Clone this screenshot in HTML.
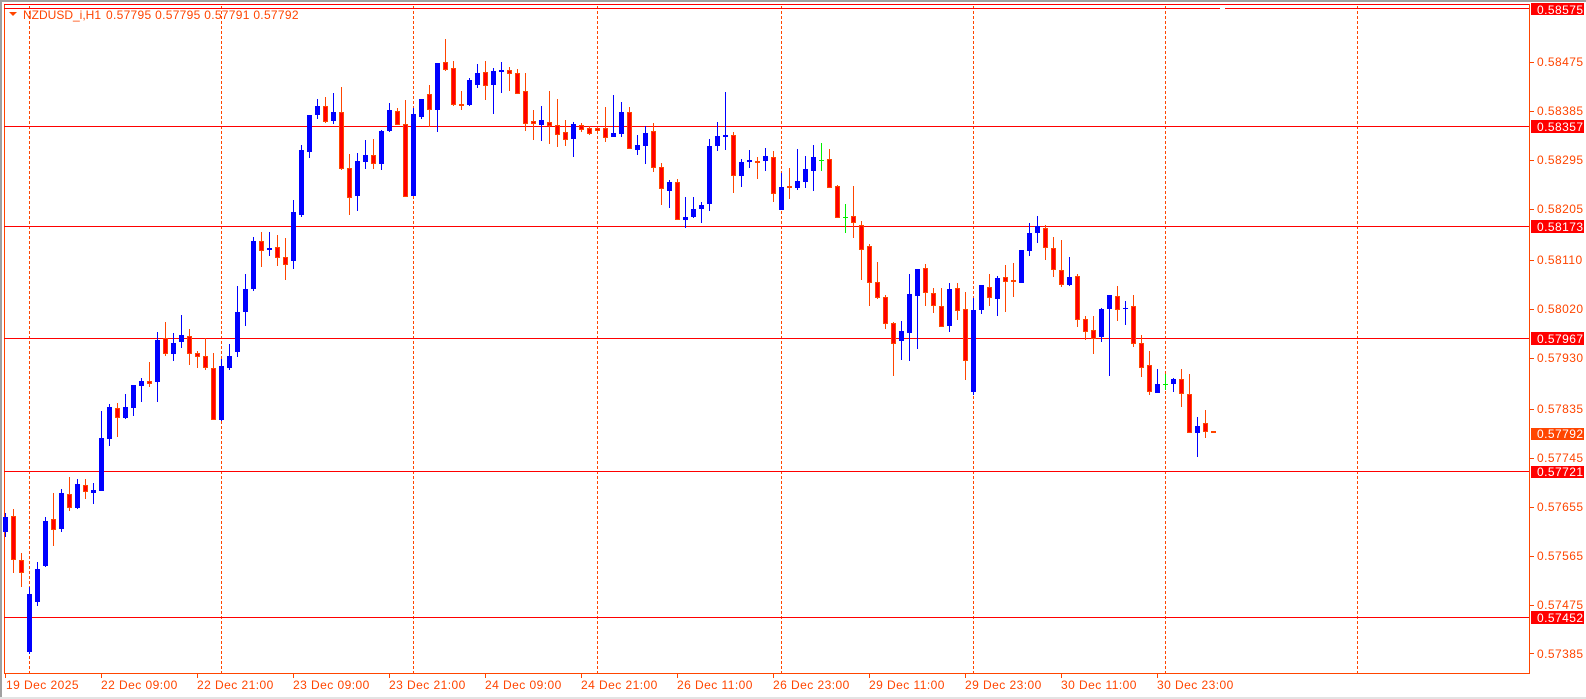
<!DOCTYPE html>
<html><head><meta charset="utf-8"><style>
html,body{margin:0;padding:0;background:#fff;width:1586px;height:699px;overflow:hidden}
svg{display:block}
text{font-family:"Liberation Sans",Arial,sans-serif;font-size:12px;letter-spacing:0.45px}
text.t{letter-spacing:0}
.b path{stroke:#0000ff;fill:none}.b rect{fill:#0000ff}
.r path{stroke:#ff4500;fill:none}.r rect{fill:#ff0000;stroke:#ff4500;stroke-width:1}
.g path{stroke:#00ee00;fill:none}.g rect{fill:#00ee00}
</style></head><body>
<svg width="1586" height="699" viewBox="0 0 1586 699" xmlns="http://www.w3.org/2000/svg">
<rect x="0" y="0" width="1586" height="699" fill="#fff"/>
<rect x="0" y="0" width="1586" height="2" fill="#a0a0a0"/>
<rect x="0" y="0" width="2" height="699" fill="#a0a0a0"/>
<rect x="0" y="697" width="1586" height="2" fill="#e3e3e3"/>
<path d="M4.5 4.5H1529.5V673.5H4.5Z" fill="none" stroke="#ff4500"/>
<g stroke="#ff4500" stroke-dasharray="3 2">
<path d="M29.5 6V673M221.5 6V673M413.5 6V673M597.5 6V673M781.5 6V673M973.5 6V673M1165.5 6V673M1357.5 6V673"/>
</g>
<g stroke="#ff0000">
<path d="M4 4.5H1529"/>
<path d="M4 8.5H1220M1225 8.5H1529"/>
<path d="M4 126.5H1529M4 226.5H1529M4 338.5H1529M4 471.5H1529M4 617.5H1529"/>
</g>
<g class="b" transform="translate(5)"><path d="M.5 513V537"/><rect x="-2" y="517" width="5" height="15"/></g>
<g class="r" transform="translate(13)"><path d="M.5 509V573"/><rect x="-1.5" y="516.5" width="4" height="43"/></g>
<g class="r" transform="translate(21)"><path d="M.5 553V587"/><rect x="-1.5" y="560.5" width="4" height="12"/></g>
<g class="b" transform="translate(29)"><path d="M.5 587V654"/><rect x="-2" y="594" width="5" height="58"/></g>
<g class="b" transform="translate(37)"><path d="M.5 562V606"/><rect x="-2" y="569" width="5" height="33"/></g>
<g class="b" transform="translate(45)"><path d="M.5 517V567"/><rect x="-2" y="521" width="5" height="45"/></g>
<g class="r" transform="translate(53)"><path d="M.5 493V546"/><rect x="-1.5" y="519.5" width="4" height="10"/></g>
<g class="b" transform="translate(61)"><path d="M.5 489V532"/><rect x="-2" y="493" width="5" height="36"/></g>
<g class="r" transform="translate(69)"><path d="M.5 477V511"/><rect x="-1.5" y="494.5" width="4" height="13"/></g>
<g class="b" transform="translate(77)"><path d="M.5 479V509"/><rect x="-2" y="484" width="5" height="24"/></g>
<g class="r" transform="translate(85)"><path d="M.5 479V499"/><rect x="-1.5" y="485.5" width="4" height="6"/></g>
<g class="b" transform="translate(93)"><path d="M.5 483V504"/><rect x="-2" y="490" width="5" height="3"/></g>
<g class="b" transform="translate(101)"><path d="M.5 411V491"/><rect x="-2" y="438" width="5" height="53"/></g>
<g class="b" transform="translate(109)"><path d="M.5 404V446"/><rect x="-2" y="407" width="5" height="32"/></g>
<g class="r" transform="translate(117)"><path d="M.5 403V437"/><rect x="-1.5" y="408.5" width="4" height="9"/></g>
<g class="b" transform="translate(125)"><path d="M.5 394V419"/><rect x="-2" y="407" width="5" height="11"/></g>
<g class="b" transform="translate(133)"><path d="M.5 385V416"/><rect x="-2" y="385" width="5" height="23"/></g>
<g class="b" transform="translate(141)"><path d="M.5 378V402"/><rect x="-2" y="381" width="5" height="5"/></g>
<g class="r" transform="translate(149)"><path d="M.5 362V387"/><rect x="-1.5" y="381.5" width="4" height="2"/></g>
<g class="b" transform="translate(157)"><path d="M.5 332V402"/><rect x="-2" y="340" width="5" height="42"/></g>
<g class="r" transform="translate(165)"><path d="M.5 322V356"/><rect x="-1.5" y="338.5" width="4" height="15"/></g>
<g class="b" transform="translate(173)"><path d="M.5 333V361"/><rect x="-2" y="343" width="5" height="11"/></g>
<g class="b" transform="translate(181)"><path d="M.5 315V348"/><rect x="-2" y="335" width="5" height="7"/></g>
<g class="r" transform="translate(189)"><path d="M.5 329V365"/><rect x="-1.5" y="336.5" width="4" height="17"/></g>
<g class="r" transform="translate(197)"><path d="M.5 351V368"/><rect x="-1.5" y="353.5" width="4" height="3"/></g>
<g class="r" transform="translate(205)"><path d="M.5 338V370"/><rect x="-1.5" y="356.5" width="4" height="11"/></g>
<g class="r" transform="translate(213)"><path d="M.5 353V419"/><rect x="-1.5" y="368.5" width="4" height="51"/></g>
<g class="b" transform="translate(221)"><path d="M.5 359V421"/><rect x="-2" y="366" width="5" height="54"/></g>
<g class="b" transform="translate(229)"><path d="M.5 344V370"/><rect x="-2" y="356" width="5" height="12"/></g>
<g class="b" transform="translate(237)"><path d="M.5 286V357"/><rect x="-2" y="312" width="5" height="40"/></g>
<g class="b" transform="translate(245)"><path d="M.5 274V326"/><rect x="-2" y="289" width="5" height="23"/></g>
<g class="b" transform="translate(253)"><path d="M.5 237V291"/><rect x="-2" y="241" width="5" height="48"/></g>
<g class="r" transform="translate(261)"><path d="M.5 232V267"/><rect x="-1.5" y="241.5" width="4" height="9"/></g>
<g class="b" transform="translate(269)"><path d="M.5 232V256"/><rect x="-2" y="248" width="5" height="2"/></g>
<g class="r" transform="translate(277)"><path d="M.5 235V266"/><rect x="-1.5" y="247.5" width="4" height="10"/></g>
<g class="r" transform="translate(285)"><path d="M.5 238V280"/><rect x="-1.5" y="257.5" width="4" height="7"/></g>
<g class="b" transform="translate(293)"><path d="M.5 200V269"/><rect x="-2" y="212" width="5" height="49"/></g>
<g class="b" transform="translate(301)"><path d="M.5 145V217"/><rect x="-2" y="150" width="5" height="65"/></g>
<g class="b" transform="translate(309)"><path d="M.5 115V158"/><rect x="-2" y="115" width="5" height="37"/></g>
<g class="b" transform="translate(317)"><path d="M.5 99V119"/><rect x="-2" y="106" width="5" height="9"/></g>
<g class="r" transform="translate(325)"><path d="M.5 97V123"/><rect x="-1.5" y="106.5" width="4" height="15"/></g>
<g class="b" transform="translate(333)"><path d="M.5 93V124"/><rect x="-2" y="112" width="5" height="9"/></g>
<g class="r" transform="translate(341)"><path d="M.5 87V170"/><rect x="-1.5" y="112.5" width="4" height="56"/></g>
<g class="r" transform="translate(349)"><path d="M.5 154V215"/><rect x="-1.5" y="168.5" width="4" height="29"/></g>
<g class="b" transform="translate(357)"><path d="M.5 153V211"/><rect x="-2" y="161" width="5" height="35"/></g>
<g class="b" transform="translate(365)"><path d="M.5 140V169"/><rect x="-2" y="155" width="5" height="7"/></g>
<g class="r" transform="translate(373)"><path d="M.5 139V169"/><rect x="-1.5" y="155.5" width="4" height="8"/></g>
<g class="b" transform="translate(381)"><path d="M.5 130V170"/><rect x="-2" y="131" width="5" height="33"/></g>
<g class="b" transform="translate(389)"><path d="M.5 103V132"/><rect x="-2" y="110" width="5" height="21"/></g>
<g class="r" transform="translate(397)"><path d="M.5 108V125"/><rect x="-1.5" y="111.5" width="4" height="13"/></g>
<g class="r" transform="translate(405)"><path d="M.5 100V196"/><rect x="-1.5" y="124.5" width="4" height="72"/></g>
<g class="b" transform="translate(413)"><path d="M.5 108V196"/><rect x="-2" y="114" width="5" height="82"/></g>
<g class="b" transform="translate(421)"><path d="M.5 99V119"/><rect x="-2" y="99" width="5" height="18"/></g>
<g class="r" transform="translate(429)"><path d="M.5 85V127"/><rect x="-1.5" y="94.5" width="4" height="15"/></g>
<g class="b" transform="translate(437)"><path d="M.5 63V132"/><rect x="-2" y="63" width="5" height="47"/></g>
<g class="r" transform="translate(445)"><path d="M.5 39V71"/><rect x="-1.5" y="62.5" width="4" height="7"/></g>
<g class="r" transform="translate(453)"><path d="M.5 61V106"/><rect x="-1.5" y="68.5" width="4" height="36"/></g>
<g class="r" transform="translate(461)"><path d="M.5 91V110"/><rect x="-1.5" y="104.5" width="4" height="1"/></g>
<g class="b" transform="translate(469)"><path d="M.5 78V106"/><rect x="-2" y="80" width="5" height="25"/></g>
<g class="b" transform="translate(477)"><path d="M.5 64V88"/><rect x="-2" y="73" width="5" height="12"/></g>
<g class="r" transform="translate(485)"><path d="M.5 61V100"/><rect x="-1.5" y="72.5" width="4" height="13"/></g>
<g class="b" transform="translate(493)"><path d="M.5 68V114"/><rect x="-2" y="71" width="5" height="14"/></g>
<g class="b" transform="translate(501)"><path d="M.5 62V93"/><rect x="-2" y="70" width="5" height="2"/></g>
<g class="r" transform="translate(509)"><path d="M.5 67V91"/><rect x="-1.5" y="70.5" width="4" height="3"/></g>
<g class="r" transform="translate(517)"><path d="M.5 69V93"/><rect x="-1.5" y="73.5" width="4" height="20"/></g>
<g class="r" transform="translate(525)"><path d="M.5 73V131"/><rect x="-1.5" y="91.5" width="4" height="32"/></g>
<g class="r" transform="translate(533)"><path d="M.5 110V140"/><rect x="-1.5" y="121.5" width="4" height="2"/></g>
<g class="b" transform="translate(541)"><path d="M.5 106V141"/><rect x="-2" y="120" width="5" height="5"/></g>
<g class="r" transform="translate(549)"><path d="M.5 91V144"/><rect x="-1.5" y="122.5" width="4" height="3"/></g>
<g class="r" transform="translate(557)"><path d="M.5 99V147"/><rect x="-1.5" y="125.5" width="4" height="9"/></g>
<g class="r" transform="translate(565)"><path d="M.5 120V146"/><rect x="-1.5" y="132.5" width="4" height="7"/></g>
<g class="b" transform="translate(573)"><path d="M.5 122V157"/><rect x="-2" y="124" width="5" height="15"/></g>
<g class="r" transform="translate(581)"><path d="M.5 123V132"/><rect x="-1.5" y="125.5" width="4" height="4"/></g>
<g class="r" transform="translate(589)"><path d="M.5 126V135"/><rect x="-1.5" y="128.5" width="4" height="5"/></g>
<g class="r" transform="translate(597)"><path d="M.5 127V131"/><rect x="-1.5" y="128.5" width="4" height="2"/></g>
<g class="r" transform="translate(605)"><path d="M.5 107V142"/><rect x="-1.5" y="128.5" width="4" height="9"/></g>
<g class="b" transform="translate(613)"><path d="M.5 95V137"/><rect x="-2" y="133" width="5" height="4"/></g>
<g class="b" transform="translate(621)"><path d="M.5 102V137"/><rect x="-2" y="112" width="5" height="22"/></g>
<g class="r" transform="translate(629)"><path d="M.5 107V148"/><rect x="-1.5" y="112.5" width="4" height="36"/></g>
<g class="b" transform="translate(637)"><path d="M.5 135V155"/><rect x="-2" y="145" width="5" height="5"/></g>
<g class="b" transform="translate(645)"><path d="M.5 126V164"/><rect x="-2" y="133" width="5" height="13"/></g>
<g class="r" transform="translate(653)"><path d="M.5 123V172"/><rect x="-1.5" y="131.5" width="4" height="36"/></g>
<g class="r" transform="translate(661)"><path d="M.5 163V205"/><rect x="-1.5" y="167.5" width="4" height="21"/></g>
<g class="b" transform="translate(669)"><path d="M.5 180V208"/><rect x="-2" y="182" width="5" height="9"/></g>
<g class="r" transform="translate(677)"><path d="M.5 179V219"/><rect x="-1.5" y="182.5" width="4" height="37"/></g>
<g class="b" transform="translate(685)"><path d="M.5 197V228"/><rect x="-2" y="217" width="5" height="3"/></g>
<g class="b" transform="translate(693)"><path d="M.5 197V218"/><rect x="-2" y="209" width="5" height="8"/></g>
<g class="b" transform="translate(701)"><path d="M.5 202V223"/><rect x="-2" y="205" width="5" height="4"/></g>
<g class="b" transform="translate(709)"><path d="M.5 139V211"/><rect x="-2" y="146" width="5" height="58"/></g>
<g class="b" transform="translate(717)"><path d="M.5 122V151"/><rect x="-2" y="136" width="5" height="10"/></g>
<g class="b" transform="translate(725)"><path d="M.5 92V150"/><rect x="-2" y="135" width="5" height="2"/></g>
<g class="r" transform="translate(733)"><path d="M.5 132V193"/><rect x="-1.5" y="135.5" width="4" height="40"/></g>
<g class="b" transform="translate(741)"><path d="M.5 159V187"/><rect x="-2" y="162" width="5" height="14"/></g>
<g class="b" transform="translate(749)"><path d="M.5 150V168"/><rect x="-2" y="160" width="5" height="2"/></g>
<g class="r" transform="translate(757)"><path d="M.5 157V179"/><rect x="-1.5" y="161.5" width="4" height="1"/></g>
<g class="b" transform="translate(765)"><path d="M.5 148V171"/><rect x="-2" y="156" width="5" height="5"/></g>
<g class="r" transform="translate(773)"><path d="M.5 151V202"/><rect x="-1.5" y="157.5" width="4" height="36"/></g>
<g class="b" transform="translate(781)"><path d="M.5 173V210"/><rect x="-2" y="187" width="5" height="23"/></g>
<g class="r" transform="translate(789)"><path d="M.5 168V199"/><rect x="-1.5" y="186.5" width="4" height="1"/></g>
<g class="b" transform="translate(797)"><path d="M.5 149V190"/><rect x="-2" y="181" width="5" height="7"/></g>
<g class="b" transform="translate(805)"><path d="M.5 156V188"/><rect x="-2" y="169" width="5" height="13"/></g>
<g class="b" transform="translate(813)"><path d="M.5 145V191"/><rect x="-2" y="157" width="5" height="14"/></g>
<g class="g" transform="translate(821)"><path d="M.5 143V171"/><rect x="-2" y="160" width="5" height="1"/></g>
<g class="r" transform="translate(829)"><path d="M.5 149V187"/><rect x="-1.5" y="159.5" width="4" height="28"/></g>
<g class="r" transform="translate(837)"><path d="M.5 185V218"/><rect x="-1.5" y="186.5" width="4" height="31"/></g>
<g class="g" transform="translate(845)"><path d="M.5 204V233"/><rect x="-2" y="217" width="5" height="1"/></g>
<g class="r" transform="translate(853)"><path d="M.5 186V238"/><rect x="-1.5" y="216.5" width="4" height="6"/></g>
<g class="r" transform="translate(861)"><path d="M.5 221V280"/><rect x="-1.5" y="225.5" width="4" height="24"/></g>
<g class="r" transform="translate(869)"><path d="M.5 244V306"/><rect x="-1.5" y="246.5" width="4" height="36"/></g>
<g class="r" transform="translate(877)"><path d="M.5 262V299"/><rect x="-1.5" y="282.5" width="4" height="15"/></g>
<g class="r" transform="translate(885)"><path d="M.5 295V329"/><rect x="-1.5" y="297.5" width="4" height="26"/></g>
<g class="r" transform="translate(893)"><path d="M.5 322V376"/><rect x="-1.5" y="323.5" width="4" height="20"/></g>
<g class="b" transform="translate(901)"><path d="M.5 321V360"/><rect x="-2" y="331" width="5" height="10"/></g>
<g class="b" transform="translate(909)"><path d="M.5 274V361"/><rect x="-2" y="294" width="5" height="39"/></g>
<g class="b" transform="translate(917)"><path d="M.5 269V349"/><rect x="-2" y="269" width="5" height="27"/></g>
<g class="r" transform="translate(925)"><path d="M.5 264V306"/><rect x="-1.5" y="268.5" width="4" height="24"/></g>
<g class="r" transform="translate(933)"><path d="M.5 288V313"/><rect x="-1.5" y="293.5" width="4" height="12"/></g>
<g class="r" transform="translate(941)"><path d="M.5 288V327"/><rect x="-1.5" y="306.5" width="4" height="20"/></g>
<g class="b" transform="translate(949)"><path d="M.5 283V332"/><rect x="-2" y="289" width="5" height="37"/></g>
<g class="r" transform="translate(957)"><path d="M.5 283V320"/><rect x="-1.5" y="288.5" width="4" height="22"/></g>
<g class="r" transform="translate(965)"><path d="M.5 292V380"/><rect x="-1.5" y="309.5" width="4" height="51"/></g>
<g class="b" transform="translate(973)"><path d="M.5 298V395"/><rect x="-2" y="310" width="5" height="82"/></g>
<g class="b" transform="translate(981)"><path d="M.5 285V314"/><rect x="-2" y="285" width="5" height="25"/></g>
<g class="r" transform="translate(989)"><path d="M.5 274V306"/><rect x="-1.5" y="287.5" width="4" height="10"/></g>
<g class="b" transform="translate(997)"><path d="M.5 276V316"/><rect x="-2" y="278" width="5" height="21"/></g>
<g class="r" transform="translate(1005)"><path d="M.5 265V312"/><rect x="-1.5" y="277.5" width="4" height="4"/></g>
<g class="r" transform="translate(1013)"><path d="M.5 263V297"/><rect x="-1.5" y="280.5" width="4" height="1"/></g>
<g class="b" transform="translate(1021)"><path d="M.5 250V283"/><rect x="-2" y="250" width="5" height="33"/></g>
<g class="b" transform="translate(1029)"><path d="M.5 223V256"/><rect x="-2" y="233" width="5" height="18"/></g>
<g class="b" transform="translate(1037)"><path d="M.5 216V243"/><rect x="-2" y="226" width="5" height="7"/></g>
<g class="r" transform="translate(1045)"><path d="M.5 225V260"/><rect x="-1.5" y="228.5" width="4" height="19"/></g>
<g class="r" transform="translate(1053)"><path d="M.5 237V277"/><rect x="-1.5" y="248.5" width="4" height="21"/></g>
<g class="r" transform="translate(1061)"><path d="M.5 240V287"/><rect x="-1.5" y="270.5" width="4" height="14"/></g>
<g class="b" transform="translate(1069)"><path d="M.5 257V286"/><rect x="-2" y="277" width="5" height="8"/></g>
<g class="r" transform="translate(1077)"><path d="M.5 274V327"/><rect x="-1.5" y="276.5" width="4" height="43"/></g>
<g class="r" transform="translate(1085)"><path d="M.5 316V340"/><rect x="-1.5" y="319.5" width="4" height="12"/></g>
<g class="r" transform="translate(1093)"><path d="M.5 316V354"/><rect x="-1.5" y="330.5" width="4" height="8"/></g>
<g class="b" transform="translate(1101)"><path d="M.5 308V342"/><rect x="-2" y="309" width="5" height="28"/></g>
<g class="b" transform="translate(1109)"><path d="M.5 295V376"/><rect x="-2" y="295" width="5" height="14"/></g>
<g class="r" transform="translate(1117)"><path d="M.5 286V321"/><rect x="-1.5" y="296.5" width="4" height="13"/></g>
<g class="b" transform="translate(1125)"><path d="M.5 301V325"/><rect x="-2" y="308" width="5" height="1"/></g>
<g class="r" transform="translate(1133)"><path d="M.5 295V347"/><rect x="-1.5" y="306.5" width="4" height="37"/></g>
<g class="r" transform="translate(1141)"><path d="M.5 335V377"/><rect x="-1.5" y="343.5" width="4" height="24"/></g>
<g class="r" transform="translate(1149)"><path d="M.5 351V395"/><rect x="-1.5" y="365.5" width="4" height="26"/></g>
<g class="b" transform="translate(1157)"><path d="M.5 369V393"/><rect x="-2" y="384" width="5" height="9"/></g>
<g class="g" transform="translate(1165)"><path d="M.5 374V390"/><rect x="-2" y="384" width="5" height="1"/></g>
<g class="b" transform="translate(1173)"><path d="M.5 378V392"/><rect x="-2" y="379" width="5" height="5"/></g>
<g class="r" transform="translate(1181)"><path d="M.5 369V407"/><rect x="-1.5" y="379.5" width="4" height="14"/></g>
<g class="r" transform="translate(1189)"><path d="M.5 374V432"/><rect x="-1.5" y="394.5" width="4" height="38"/></g>
<g class="b" transform="translate(1197)"><path d="M.5 417V457"/><rect x="-2" y="426" width="5" height="7"/></g>
<g class="r" transform="translate(1205)"><path d="M.5 410V438"/><rect x="-1.5" y="423.5" width="4" height="8"/></g>
<g class="r" transform="translate(1213)"><rect x="-1.5" y="431.5" width="4" height="1"/></g>

<g stroke="#ff4500"><path d="M1530 62.5H1534M1530 111.5H1534M1530 160.5H1534M1530 209.5H1534M1530 260.5H1534M1530 309.5H1534M1530 358.5H1534M1530 409.5H1534M1530 458.5H1534M1530 507.5H1534M1530 556.5H1534M1530 605.5H1534M1530 653.5H1534"/></g>
<g fill="#ff4500">
<text x="1537" y="66">0.58475</text>
<text x="1537" y="115">0.58385</text>
<text x="1537" y="164">0.58295</text>
<text x="1537" y="213">0.58205</text>
<text x="1537" y="264">0.58110</text>
<text x="1537" y="313">0.58020</text>
<text x="1537" y="362">0.57930</text>
<text x="1537" y="413">0.57835</text>
<text x="1537" y="462">0.57745</text>
<text x="1537" y="511">0.57655</text>
<text x="1537" y="560">0.57565</text>
<text x="1537" y="609">0.57475</text>
<text x="1537" y="658">0.57385</text>
</g>
<g fill="#ff0000">
<rect x="1531" y="3" width="53" height="12"/>
<rect x="1531" y="120" width="53" height="13"/>
<rect x="1531" y="220" width="53" height="13"/>
<rect x="1531" y="332" width="53" height="13"/>
<rect x="1531" y="466" width="53" height="12"/>
<rect x="1531" y="611" width="53" height="13"/>
</g>
<rect x="1531" y="428" width="53" height="12" fill="#ff4500"/>
<g fill="#fff">
<text x="1537" y="14">0.58575</text>
<text x="1537" y="131">0.58357</text>
<text x="1537" y="231">0.58173</text>
<text x="1537" y="343">0.57967</text>
<text x="1537" y="438">0.57792</text>
<text x="1537" y="476">0.57721</text>
<text x="1537" y="622">0.57452</text>
</g>
<g stroke="#ff4500"><path d="M5.5 673V678M101.5 673V678M197.5 673V678M293.5 673V678M389.5 673V678M485.5 673V678M581.5 673V678M677.5 673V678M773.5 673V678M869.5 673V678M965.5 673V678M1061.5 673V678M1157.5 673V678"/></g>
<g fill="#ff4500">
<text x="6" y="689">19 Dec 2025</text>
<text x="101" y="689">22 Dec 09:00</text>
<text x="197" y="689">22 Dec 21:00</text>
<text x="293" y="689">23 Dec 09:00</text>
<text x="389" y="689">23 Dec 21:00</text>
<text x="485" y="689">24 Dec 09:00</text>
<text x="581" y="689">24 Dec 21:00</text>
<text x="677" y="689">26 Dec 11:00</text>
<text x="773" y="689">26 Dec 23:00</text>
<text x="869" y="689">29 Dec 11:00</text>
<text x="965" y="689">29 Dec 23:00</text>
<text x="1061" y="689">30 Dec 11:00</text>
<text x="1157" y="689">30 Dec 23:00</text>
</g>
<path d="M9 12H17L13 16Z" fill="#ff4500"/>
<text class="t" x="23" y="19" fill="#ff4500">NZDUSD_i,H1</text>
<text class="t" x="106" y="19" fill="#ff4500" style="letter-spacing:0.3px">0.57795 0.57795 0.57791 0.57792</text>
</svg>
</body></html>
